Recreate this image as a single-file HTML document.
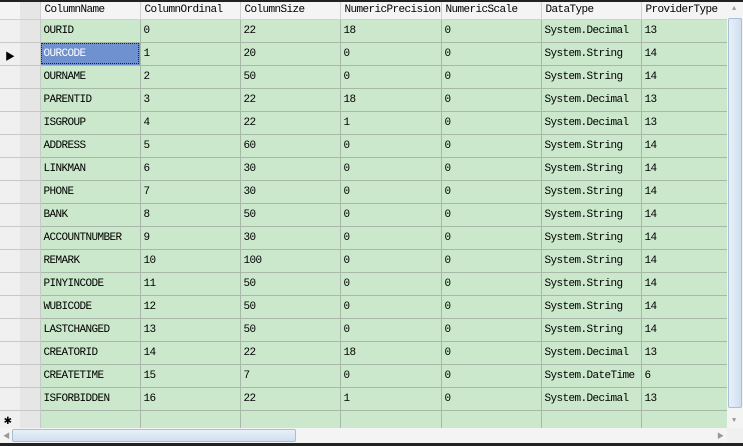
<!DOCTYPE html><html><head><style>
body{margin:0;width:743px;height:446px;overflow:hidden;background:#fff;font-family:"Liberation Mono","Noto Sans CJK SC",monospace;font-size:11px;letter-spacing:-0.6px;color:#000;position:relative}
.topb{position:absolute;left:0;top:0;width:743px;height:2px;background:#222}
.botb{position:absolute;left:0;top:443px;width:743px;height:3px;background:#222}
table{position:absolute;left:0;top:2px;border-collapse:collapse;table-layout:fixed}
td{height:23px;border-right:1px solid #a8b8a8;border-bottom:1px solid #a8b8a8;background:#cce8cc;padding:0 0 0 3px;white-space:nowrap;overflow:hidden;box-sizing:border-box}
tr.h td{height:17px;background:#f4f4f4;border-right:1px solid #d0d0d0;border-bottom:1px solid #d0d0d0;padding-left:4px}
td.rh{background:#f0f0f0;border-right:1px solid #c8c8c8;border-bottom:1px solid #c8c8c8;padding:0;position:relative}
td.rh:after{content:"";position:absolute;left:20px;top:0;width:20px;height:100%;background:#e6e6e6}
td.sel{background:#7091d0;color:#fff;outline:1px dotted #222;outline-offset:-2px}
tr.n td{height:18px}
.vs{position:absolute;left:727px;top:2px;width:16px;height:426px;background:#f4f4f4}
.vt{position:absolute;left:728px;top:18px;width:14px;height:390px;background:linear-gradient(90deg,#e8f0f8,#cfdff0);border:1px solid #a9bfd6;box-sizing:border-box;border-radius:2px}
.hs{position:absolute;left:0;top:428px;width:727px;height:15px;background:#f4f4f4}
.ht{position:absolute;left:12px;top:429px;width:284px;height:13px;background:linear-gradient(#e8f0f8,#cfdff0);border:1px solid #a9bfd6;box-sizing:border-box;border-radius:2px}
.cor{position:absolute;left:727px;top:428px;width:16px;height:15px;background:#f0f0f0}
.ar{position:absolute;font-size:7px;color:#999}
</style></head><body>
<div class="topb"></div>
<table>
<colgroup><col style="width:40px"><col style="width:100px"><col style="width:100px"><col style="width:100px"><col style="width:100px"><col style="width:100px"><col style="width:100px"><col style="width:87px"></colgroup>
<tr class="h"><td class="rh"></td><td>ColumnName</td><td>ColumnOrdinal</td><td>ColumnSize</td><td>NumericPrecision</td><td>NumericScale</td><td>DataType</td><td>ProviderType</td></tr>
<tr><td class="rh"></td><td>OURID</td><td>0</td><td>22</td><td>18</td><td>0</td><td>System.Decimal</td><td>13</td></tr>
<tr><td class="rh"><span style="position:absolute;left:5px;top:5px;z-index:2;font-size:10px">&#9654;</span></td><td class="sel">OURCODE</td><td>1</td><td>20</td><td>0</td><td>0</td><td>System.String</td><td>14</td></tr>
<tr><td class="rh"></td><td>OURNAME</td><td>2</td><td>50</td><td>0</td><td>0</td><td>System.String</td><td>14</td></tr>
<tr><td class="rh"></td><td>PARENTID</td><td>3</td><td>22</td><td>18</td><td>0</td><td>System.Decimal</td><td>13</td></tr>
<tr><td class="rh"></td><td>ISGROUP</td><td>4</td><td>22</td><td>1</td><td>0</td><td>System.Decimal</td><td>13</td></tr>
<tr><td class="rh"></td><td>ADDRESS</td><td>5</td><td>60</td><td>0</td><td>0</td><td>System.String</td><td>14</td></tr>
<tr><td class="rh"></td><td>LINKMAN</td><td>6</td><td>30</td><td>0</td><td>0</td><td>System.String</td><td>14</td></tr>
<tr><td class="rh"></td><td>PHONE</td><td>7</td><td>30</td><td>0</td><td>0</td><td>System.String</td><td>14</td></tr>
<tr><td class="rh"></td><td>BANK</td><td>8</td><td>50</td><td>0</td><td>0</td><td>System.String</td><td>14</td></tr>
<tr><td class="rh"></td><td>ACCOUNTNUMBER</td><td>9</td><td>30</td><td>0</td><td>0</td><td>System.String</td><td>14</td></tr>
<tr><td class="rh"></td><td>REMARK</td><td>10</td><td>100</td><td>0</td><td>0</td><td>System.String</td><td>14</td></tr>
<tr><td class="rh"></td><td>PINYINCODE</td><td>11</td><td>50</td><td>0</td><td>0</td><td>System.String</td><td>14</td></tr>
<tr><td class="rh"></td><td>WUBICODE</td><td>12</td><td>50</td><td>0</td><td>0</td><td>System.String</td><td>14</td></tr>
<tr><td class="rh"></td><td>LASTCHANGED</td><td>13</td><td>50</td><td>0</td><td>0</td><td>System.String</td><td>14</td></tr>
<tr><td class="rh"></td><td>CREATORID</td><td>14</td><td>22</td><td>18</td><td>0</td><td>System.Decimal</td><td>13</td></tr>
<tr><td class="rh"></td><td>CREATETIME</td><td>15</td><td>7</td><td>0</td><td>0</td><td>System.DateTime</td><td>6</td></tr>
<tr><td class="rh"></td><td>ISFORBIDDEN</td><td>16</td><td>22</td><td>1</td><td>0</td><td>System.Decimal</td><td>13</td></tr>
<tr class="n"><td class="rh"><span style="position:absolute;left:4px;top:2px;z-index:2;font-size:13px">&#10033;</span></td><td></td><td></td><td></td><td></td><td></td><td></td><td></td></tr>
</table>
<div class="vs"></div><div class="vt"></div>
<div class="ar" style="left:732px;top:5px">&#9650;</div>
<div class="ar" style="left:732px;top:417px">&#9660;</div>
<div class="hs"></div><div class="ht"></div>
<div class="ar" style="left:3px;top:431px">&#9664;</div>
<div class="ar" style="left:717px;top:431px">&#9654;</div>
<div class="cor"></div>
<div class="botb"></div>
</body></html>
